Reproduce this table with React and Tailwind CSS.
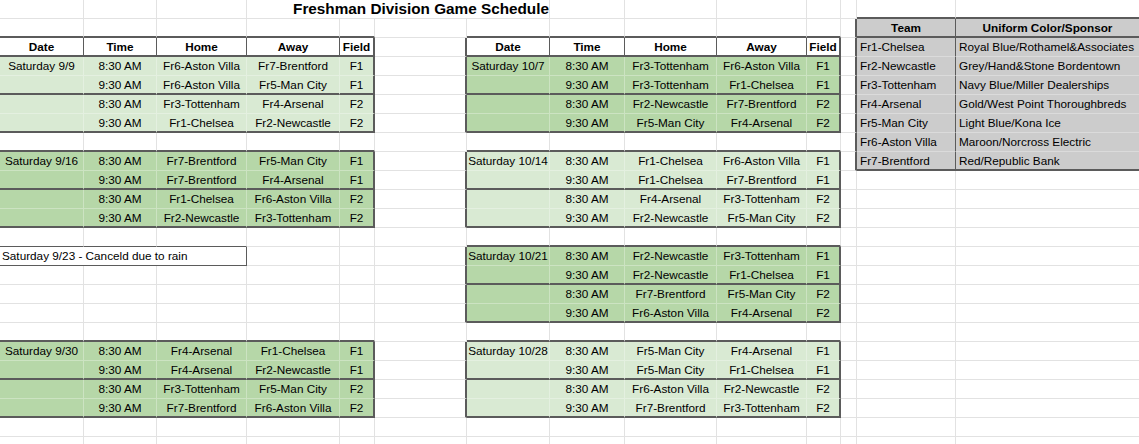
import React from "react";

// ── Sheet layout: 14 columns, 19px rows ─────────────────────────────────
var ROWS = 24;
var COLS = 14;

var FILL = {
  light: "bg-[#d9ead3]",
  dark: "bg-[#b6d7a8]",
  gray: "bg-[#cccccc]",
  white: "bg-white",
};

var BOTTOM = {
  grid: "border-b border-b-[#e2e2e2]",
  inner: "border-b border-b-white/30",
  thin: "border-b border-b-[#5b5b5b]",
  thick: "border-b-2 border-b-[#5b5b5b]",
  none: "",
};

var RIGHT = {
  grid: "border-r border-r-[#e2e2e2]",
  inner: "border-r border-r-white/30",
  thin: "border-r border-r-[#5b5b5b]",
  thick: "border-r-2 border-r-[#5b5b5b]",
  none: "",
};

var SCHEDULES = [
  { c0: 0, r0: 2, header: true, fill: "light", date: "Saturday 9/9", games: [
    ["8:30 AM", "Fr6-Aston Villa", "Fr7-Brentford", "F1"],
    ["9:30 AM", "Fr6-Aston Villa", "Fr5-Man City", "F1"],
    ["8:30 AM", "Fr3-Tottenham", "Fr4-Arsenal", "F2"],
    ["9:30 AM", "Fr1-Chelsea", "Fr2-Newcastle", "F2"],
  ] },
  { c0: 0, r0: 8, header: false, fill: "dark", date: "Saturday 9/16", games: [
    ["8:30 AM", "Fr7-Brentford", "Fr5-Man City", "F1"],
    ["9:30 AM", "Fr7-Brentford", "Fr4-Arsenal", "F1"],
    ["8:30 AM", "Fr1-Chelsea", "Fr6-Aston Villa", "F2"],
    ["9:30 AM", "Fr2-Newcastle", "Fr3-Tottenham", "F2"],
  ] },
  { c0: 0, r0: 18, header: false, fill: "dark", date: "Saturday 9/30", games: [
    ["8:30 AM", "Fr4-Arsenal", "Fr1-Chelsea", "F1"],
    ["9:30 AM", "Fr4-Arsenal", "Fr2-Newcastle", "F1"],
    ["8:30 AM", "Fr3-Tottenham", "Fr5-Man City", "F2"],
    ["9:30 AM", "Fr7-Brentford", "Fr6-Aston Villa", "F2"],
  ] },
  { c0: 6, r0: 2, header: true, fill: "dark", date: "Saturday 10/7", games: [
    ["8:30 AM", "Fr3-Tottenham", "Fr6-Aston Villa", "F1"],
    ["9:30 AM", "Fr3-Tottenham", "Fr1-Chelsea", "F1"],
    ["8:30 AM", "Fr2-Newcastle", "Fr7-Brentford", "F2"],
    ["9:30 AM", "Fr5-Man City", "Fr4-Arsenal", "F2"],
  ] },
  { c0: 6, r0: 8, header: false, fill: "light", date: "Saturday 10/14", games: [
    ["8:30 AM", "Fr1-Chelsea", "Fr6-Aston Villa", "F1"],
    ["9:30 AM", "Fr1-Chelsea", "Fr7-Brentford", "F1"],
    ["8:30 AM", "Fr4-Arsenal", "Fr3-Tottenham", "F2"],
    ["9:30 AM", "Fr2-Newcastle", "Fr5-Man City", "F2"],
  ] },
  { c0: 6, r0: 13, header: false, fill: "dark", date: "Saturday 10/21", games: [
    ["8:30 AM", "Fr2-Newcastle", "Fr3-Tottenham", "F1"],
    ["9:30 AM", "Fr2-Newcastle", "Fr1-Chelsea", "F1"],
    ["8:30 AM", "Fr7-Brentford", "Fr5-Man City", "F2"],
    ["9:30 AM", "Fr6-Aston Villa", "Fr4-Arsenal", "F2"],
  ] },
  { c0: 6, r0: 18, header: false, fill: "light", date: "Saturday 10/28", games: [
    ["8:30 AM", "Fr5-Man City", "Fr4-Arsenal", "F1"],
    ["9:30 AM", "Fr5-Man City", "Fr1-Chelsea", "F1"],
    ["8:30 AM", "Fr6-Aston Villa", "Fr2-Newcastle", "F2"],
    ["9:30 AM", "Fr7-Brentford", "Fr3-Tottenham", "F2"],
  ] },
];

var TEAMS = [
  ["Fr1-Chelsea", "Royal Blue/Rothamel&Associates"],
  ["Fr2-Newcastle", "Grey/Hand&Stone Bordentown"],
  ["Fr3-Tottenham", "Navy Blue/Miller Dealerships"],
  ["Fr4-Arsenal", "Gold/West Point Thoroughbreds"],
  ["Fr5-Man City", "Light Blue/Kona Ice"],
  ["Fr6-Aston Villa", "Maroon/Norcross Electric"],
  ["Fr7-Brentford", "Red/Republic Bank"],
];

function buildSheet() {
  var map = [];
  for (var r = 0; r < ROWS; r++) map.push(new Array(COLS).fill(null));
  function put(r, c, cell) { map[r][c] = cell; }

  SCHEDULES.forEach(function (s) {
    var h = s.header ? 1 : 0;
    var t = { c0: s.c0, c1: s.c0 + 4, r0: s.r0, r1: s.r0 + h + 3, headerRow: s.header ? s.r0 : -1,
      groupEnd: s.r0 + h + 1, weight: "thick", fill: s.fill };
    if (s.header) {
      ["Date", "Time", "Home", "Away", "Field"].forEach(function (txt, i) {
        put(s.r0, s.c0 + i, { t: t, text: txt, bold: true, align: "center", fill: "white" });
      });
    }
    s.games.forEach(function (g, gi) {
      var row = [gi === 0 ? s.date : ""].concat(g);
      row.forEach(function (txt, i) {
        put(s.r0 + h + gi, s.c0 + i, { t: t, text: txt, align: "center", fill: s.fill });
      });
    });
  });

  // cancelled game box
  var box = { c0: 0, c1: 2, r0: 13, r1: 13, headerRow: -1, groupEnd: -1, weight: "thin" };
  put(13, 0, { t: box, text: "Saturday 9/23 - Canceld due to rain", align: "left", span: 3, fill: "white" });
  put(13, 1, { t: box, skip: true });
  put(13, 2, { t: box, skip: true });

  // team / sponsor table
  var team = { c0: 12, c1: 13, r0: 1, r1: 8, headerRow: 1, groupEnd: -1, weight: "thick", vDark: true, noRight: true };
  put(1, 12, { t: team, text: "Team", bold: true, align: "center", fill: "gray" });
  put(1, 13, { t: team, text: "Uniform Color/Sponsor", bold: true, align: "center", fill: "gray" });
  TEAMS.forEach(function (tm, i) {
    put(2 + i, 12, { t: team, text: tm[0], align: "left", fill: "gray" });
    put(2 + i, 13, { t: team, text: tm[1], align: "left", fill: "gray" });
  });

  put(0, 5, { text: "Freshman Division Game Schedule", title: true, align: "center" });
  return map;
}

function App() {
  var map = buildSheet();
  function at(r, c) { return map[r] && map[r][c] ? map[r][c] : null; }

  function bottomKind(r, c) {
    var a = at(r, c), b = at(r + 1, c);
    var at_ = a && a.t, bt = b && b.t;
    if (bt && r + 1 === bt.r0 && at_ !== bt) return bt.weight;
    if (at_) {
      if (r === at_.r1 || r === at_.headerRow || r === at_.groupEnd) return at_.weight;
      return "inner";
    }
    return "grid";
  }

  function rightKind(r, c) {
    var a = at(r, c), b = at(r, c + 1);
    var at_ = a && a.t, bt = b && b.t;
    if (bt && c + 1 === bt.c0 && at_ !== bt) return bt.weight;
    if (at_) {
      if (c === at_.c1) return at_.noRight ? "grid" : at_.weight;
      if (r === at_.headerRow || at_.vDark) return "thin";
      return "inner";
    }
    if (r === 0 && (c === 3 || c === 4 || c === 5)) return "none";
    return "grid";
  }

  var cells = [];
  for (var r = 0; r < ROWS; r++) {
    for (var c = 0; c < COLS; c++) {
      var cell = at(r, c);
      if (cell && cell.skip) continue;
      var span = cell && cell.span ? cell.span : 1;
      var lastC = c + span - 1;
      var align = "justify-center";
      if (cell && cell.align === "left") align = cell.t && cell.t.weight === "thin" ? "justify-start pl-[2px]" : "justify-start pl-[3px]";
      var text = "text-[11.75px]";
      if (cell && cell.bold) text = "text-[11.75px] font-bold";
      if (cell && cell.title) text = "text-[15.3px] font-bold";
      cells.push(
        <div key={r + "-" + c}
          className={"flex items-center whitespace-nowrap leading-none " + align + " " + text + " " +
            (span === 3 ? "col-span-3 " : "") +
            (cell && cell.fill ? FILL[cell.fill] + " " : "") +
            BOTTOM[bottomKind(r, lastC)] + " " + RIGHT[rightKind(r, lastC)]}>
          {cell && cell.text ? <span>{cell.text}</span> : null}
        </div>
      );
    }
  }

  return (
    <div className="w-[1139px] h-[444px] overflow-hidden bg-white text-black font-['Liberation_Sans',Arial,sans-serif]">
      <div className="grid grid-cols-[84px_73px_90px_93px_35px_92px_83px_75px_92px_90px_34px_16px_99px_184px] auto-rows-[19px]">
        {cells}
      </div>
    </div>
  );
}

export default App;
